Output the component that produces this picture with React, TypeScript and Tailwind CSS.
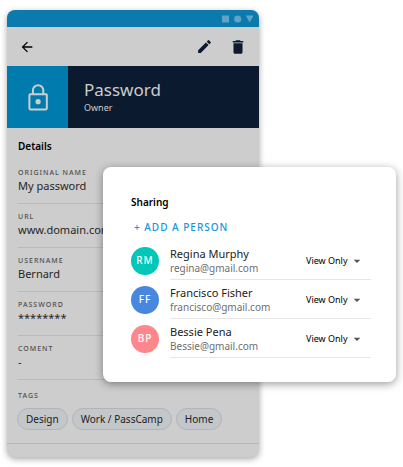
import { ReactNode } from 'react';
import { MdArrowBack, MdArrowDropDown, MdDelete, MdEdit } from 'react-icons/md';

const details = [
  { label: 'Original name', value: 'My password' },
  { label: 'URL', value: 'www.domain.com' },
  { label: 'Username', value: 'Bernard' },
  { label: 'Password', value: '********' },
  { label: 'Coment', value: '-' },
];

const tags = ['Design', 'Work / PassCamp', 'Home'];

const people = [
  {
    initials: 'RM',
    name: 'Regina Murphy',
    email: 'regina@gmail.com',
    color: 'bg-[#00c7b7]',
  },
  {
    initials: 'FF',
    name: 'Francisco Fisher',
    email: 'francisco@gmail.com',
    color: 'bg-[#4887e0]',
  },
  {
    initials: 'BP',
    name: 'Bessie Pena',
    email: 'Bessie@gmail.com',
    color: 'bg-[#ff878c]',
  },
];

function StatusBar() {
  return (
    <div className="flex h-[17px] items-center justify-end bg-[#0b7aad] pr-[5px]">
      <svg width="32" height="8" viewBox="0 0 32 8" fill="#5fa3c6">
        <rect x="0" y="0.5" width="7" height="7" />
        <circle cx="15.7" cy="4" r="3.6" />
        <path d="M23.7 0.5h8l-4 7z" />
      </svg>
    </div>
  );
}

function LockIcon() {
  return (
    <svg width="20" height="27" viewBox="0 0 20 27" fill="none">
      <rect
        x="1.4"
        y="10.2"
        width="17.4"
        height="15.2"
        rx="0.8"
        stroke="#cdcdcd"
        strokeWidth="2"
      />
      <path
        d="M4.9 10V6.4a5.2 5.2 0 0 1 10.4 0V10"
        stroke="#cdcdcd"
        strokeWidth="2"
      />
      <circle cx="10.1" cy="17.7" r="2.6" fill="#cdcdcd" />
    </svg>
  );
}

function Label({ children }: { children: ReactNode }) {
  return (
    <span className="text-[7px] leading-3 font-medium tracking-[1px] text-[#505050] uppercase">
      {children}
    </span>
  );
}

function Phone() {
  return (
    <section className="ml-[7px] w-5/8 overflow-hidden rounded-lg bg-[#cdcdcd] shadow-[0_2px_6px_rgba(0,0,0,0.35)]">
      <StatusBar />
      <nav className="flex h-[39px] items-center px-3 text-[#0b1a2e]">
        <button aria-label="Back" className="mr-auto text-black">
          <MdArrowBack size={16} />
        </button>
        <button aria-label="Edit" className="mr-4">
          <MdEdit size={17} />
        </button>
        <button aria-label="Delete">
          <MdDelete size={18} />
        </button>
      </nav>
      <header className="flex h-[62px] bg-[#0b1a2e] text-[#cdcdcd]">
        <div className="flex w-[61px] items-center justify-center bg-[#007bad]">
          <LockIcon />
        </div>
        <div className="flex flex-col justify-center pt-0.5 pl-4">
          <h1 className="text-[17px] leading-5">Password</h1>
          <p className="text-[9px] leading-4">Owner</p>
        </div>
      </header>
      <div className="px-[11px] pt-3">
        <h2 className="text-[10px] leading-3 font-semibold text-black">
          Details
        </h2>
        <dl className="pt-2">
          {details.map(({ label, value }) => (
            <div
              key={label}
              className="flex h-11 flex-col justify-end border-b border-[#bababa] pb-[10px]"
            >
              <dt className="flex">
                <Label>{label}</Label>
              </dt>
              <dd className="text-[11px] leading-[14px] text-[#262626]">
                {value}
              </dd>
            </div>
          ))}
        </dl>
        <div className="flex pt-[10px]">
          <Label>Tags</Label>
        </div>
        <ul className="-mx-px flex gap-1 pt-[6px] pb-[13px]">
          {tags.map((tag) => (
            <li
              key={tag}
              className="flex h-[22px] items-center rounded-full border border-[#b2b4b6] bg-[#c4c7ca] px-2 text-[10px] whitespace-nowrap text-[#202020]"
            >
              {tag}
            </li>
          ))}
        </ul>
      </div>
      <div className="h-[14px] border-t border-[#b5b5b5]" />
    </section>
  );
}

function SharingCard() {
  return (
    <section className="absolute top-[167px] right-[7px] left-[103px] rounded-lg bg-white pt-[27px] pr-[25px] pb-6 pl-7 shadow-[0_2px_8px_rgba(0,0,0,0.4)]">
      <h2 className="text-[10px] leading-4 font-semibold text-black">
        Sharing
      </h2>
      <button className="mt-[9px] ml-[3px] flex text-[10px] leading-4 font-medium tracking-[1px] text-[#1696d6] uppercase">
        + Add a person
      </button>
      <ul className="pt-[6px]">
        {people.map(({ initials, name, email, color }) => (
          <li key={email} className="flex h-[39px] items-center gap-[11px]">
            <span
              className={`flex size-7 shrink-0 items-center justify-center rounded-full text-[10px] font-medium tracking-[1px] text-white ${color}`}
            >
              {initials}
            </span>
            <div className="flex h-full flex-1 items-center justify-between border-b border-[#e6e6e6] pt-0.5">
              <div>
                <p className="text-[11px] leading-[14px] text-[#222]">{name}</p>
                <p className="text-[10px] leading-[14px] text-[#6f6f6f]">
                  {email}
                </p>
              </div>
              <div className="relative flex items-center">
                <select
                  aria-label={`Access for ${name}`}
                  className="appearance-none pr-[23px] text-[9px] leading-4 text-black"
                >
                  <option>View Only</option>
                </select>
                <MdArrowDropDown
                  size={16}
                  className="pointer-events-none absolute right-[6px] text-[#555]"
                />
              </div>
            </div>
          </li>
        ))}
      </ul>
    </section>
  );
}

export default function App() {
  return (
    <main className="relative min-h-screen bg-white py-[10px] font-['Noto_Sans','Open_Sans',sans-serif]">
      <Phone />
      <SharingCard />
    </main>
  );
}
